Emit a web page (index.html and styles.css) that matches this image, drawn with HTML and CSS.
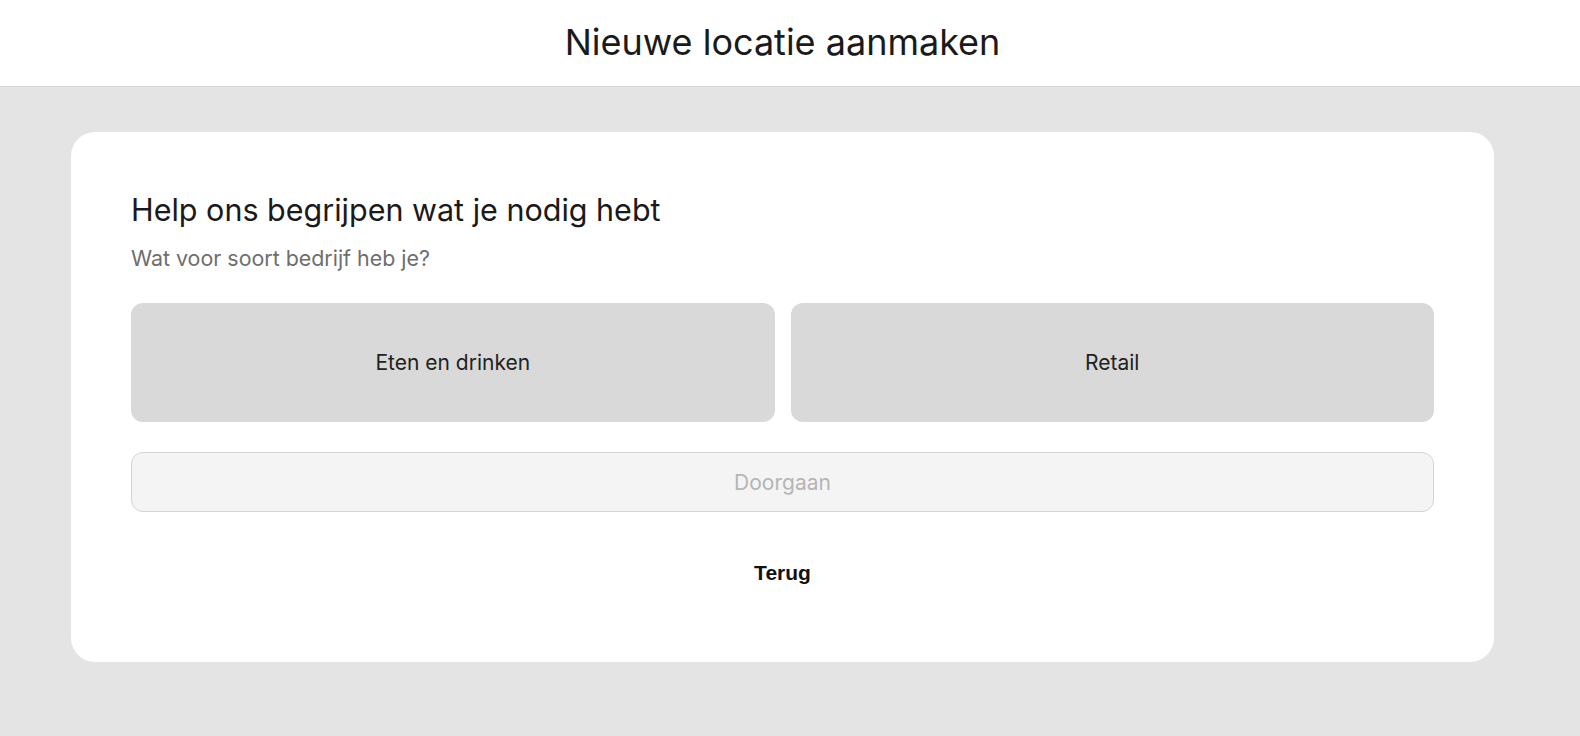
FILE: index.html
```html
<!DOCTYPE html>
<html lang="nl">
<head>
<meta charset="utf-8">
<title>Nieuwe locatie aanmaken</title>
<link rel="stylesheet" href="styles.css">
</head>
<body>
<header class="topbar">
  <div class="topbar-inner">
    <h1 class="topbar-title">Nieuwe locatie aanmaken</h1>
  </div>
</header>
<main class="content">
  <section class="card">
    <h2 class="card-title">Help ons begrijpen wat je nodig hebt</h2>
    <p class="card-subtitle">Wat voor soort bedrijf heb je?</p>
    <div class="options">
      <button class="option" type="button">Eten en drinken</button>
      <button class="option" type="button">Retail</button>
    </div>
    <button class="continue" type="button" disabled>Doorgaan</button>
    <div class="back-row">
      <button class="back" type="button">Terug</button>
    </div>
  </section>
</main>
</body>
</html>
```

FILE: styles.css
```css
* { box-sizing: border-box; }
html, body { margin: 0; padding: 0; min-height: 100%; }
body {
  background: #e4e4e4;
  font-family: Inter, "Noto Sans", sans-serif;
  color: #1a1a1a;
}
.topbar {
  background: #ffffff;
  border-bottom: 1px solid #d6d6d6;
}
.topbar-inner {
  width: 1565px;
  height: 86px;
  display: flex;
  align-items: center;
  justify-content: center;
}
.topbar-title {
  margin: 0;
  font-size: 36px;
  font-weight: 400;
  color: #1a1a1a;
  line-height: 1;
  padding-bottom: 2px;
}
.content {
  width: 1565px;
  padding: 45px 71px 60px;
}
.card {
  background: #ffffff;
  border-radius: 24px;
  padding: 60px 60px 77px;
  display: flex;
  flex-direction: column;
}
.card-title {
  margin: 0;
  font-size: 30.5px;
  font-weight: 400;
  line-height: 36px;
  color: #1a1a1a;
}
.card-subtitle {
  margin: 16px 0 0;
  font-size: 21.4px;
  line-height: 28px;
  color: #6e6e6e;
}
.options {
  margin-top: 31px;
  display: grid;
  grid-template-columns: 1fr 1fr;
  gap: 16px;
}
.option {
  height: 119px;
  border: none;
  border-radius: 12px;
  background: #d9d9d9;
  font-family: Inter, "Noto Sans", sans-serif;
  font-size: 21px;
  color: #222222;
  cursor: pointer;
}
.continue {
  margin-top: 30px;
  height: 60px;
  border: 1px solid #d4d4d4;
  border-radius: 12px;
  background: #f4f4f4;
  font-family: Inter, "Noto Sans", sans-serif;
  font-size: 21px;
  color: #b5b5b5;
}
.back-row {
  margin-top: 49px;
  display: flex;
  justify-content: center;
}
.back {
  border: none;
  background: none;
  padding: 0;
  font-family: "Liberation Sans", Arial, sans-serif;
  font-weight: 700;
  font-size: 21px;
  line-height: 24px;
  color: #111111;
  cursor: pointer;
}
```
